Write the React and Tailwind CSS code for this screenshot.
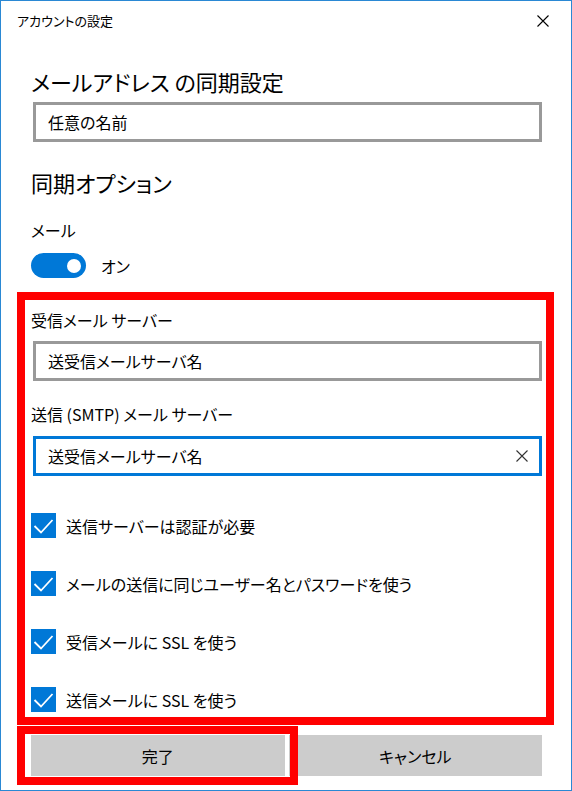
import React from 'react';

const FONT = "font-['Noto_Sans_CJK_JP','Noto_Sans',sans-serif] [font-feature-settings:'palt']";

function CloseIcon({ className }) {
  return (
    <svg viewBox="0 0 12 12" className={className} fill="none" stroke="currentColor" strokeWidth="1.1">
      <path d="M0.5 0.5 L11.5 11.5 M11.5 0.5 L0.5 11.5" />
    </svg>
  );
}

function TextBox({ value, focused }) {
  return (
    <div
      className={`ml-[2px] h-[40px] flex items-center justify-between border-[3px] pl-[12px] pr-[11px] ${
        focused ? 'border-[#0078d7]' : 'border-[#999999]'
      }`}
    >
      <span className="text-[16px] text-black">{value}</span>
      {focused && <CloseIcon className="w-[12px] h-[12px] text-[#333333]" />}
    </div>
  );
}

function CheckRow({ label, className }) {
  return (
    <div className={`flex items-center h-[25px] ${className}`}>
      <div className="w-[25px] h-[25px] bg-[#0078d7] flex items-center justify-center">
        <svg viewBox="0 0 25 25" className="w-[25px] h-[25px]" fill="none" stroke="white" strokeWidth="1.8">
          <path d="M3.5 13 L10 19.5 L21.5 7" />
        </svg>
      </div>
      <span className="ml-[10px] text-[16px] text-black">{label}</span>
    </div>
  );
}

export default function App() {
  return (
    <div className={`w-[572px] h-[791px] bg-white border border-[#2a88d4] flex flex-col ${FONT}`}>
      {/* Title bar */}
      <div className="h-[39px] flex items-center justify-between pl-[16px] pr-[22px]">
        <span className="text-[13px] text-black">アカウントの設定</span>
        <CloseIcon className="w-[12px] h-[12px] text-black" />
      </div>

      <div className="flex flex-col pl-[30px] pr-[29px]">
        <div className="mt-[25px] h-[32px] leading-[32px] text-[22px] text-black">メールアドレス の同期設定</div>
        <div className="mt-[5px]">
          <TextBox value="任意の名前" />
        </div>

        <div className="mt-[24px] h-[32px] leading-[32px] text-[22px] text-black">同期オプション</div>
        <div className="mt-[20px] h-[24px] leading-[24px] text-[16px] text-black">メール</div>
        <div className="mt-[11px] h-[25px] flex items-center">
          <div className="w-[55px] h-[25px] rounded-full bg-[#0078d7] flex items-center justify-end pr-[5px]">
            <div className="w-[14px] h-[14px] rounded-full bg-white" />
          </div>
          <span className="ml-[15px] text-[16px] text-black">オン</span>
        </div>

        {/* Server settings */}
        <div className="relative mt-[14px] pt-[16px] pb-[13px] flex flex-col">
          <div className="absolute -left-[14px] -right-[12px] top-0 bottom-0 border-8 border-[#ff0000] pointer-events-none" />
          <div className="h-[24px] leading-[24px] text-[16px] text-black">受信メール サーバー</div>
          <div className="mt-[9px]">
            <TextBox value="送受信メールサーバ名" />
          </div>
          <div className="mt-[21px] h-[24px] leading-[24px] text-[16px] text-black">送信 (SMTP) メール サーバー</div>
          <div className="mt-[10px]">
            <TextBox value="送受信メールサーバ名" focused />
          </div>
          <CheckRow className="mt-[37px]" label="送信サーバーは認証が必要" />
          <CheckRow className="mt-[33px]" label="メールの送信に同じユーザー名とパスワードを使う" />
          <CheckRow className="mt-[33px]" label="受信メールに SSL を使う" />
          <CheckRow className="mt-[33px]" label="送信メールに SSL を使う" />
        </div>

        {/* Buttons */}
        <div className="mt-[10px] grid grid-cols-2 gap-[4px]">
          <div className="relative">
            <button className="w-full h-[41px] bg-[#cccccc] text-[16px] text-black">完了</button>
            <div className="absolute z-10 -left-[14px] -right-[13px] -top-[9px] -bottom-[9px] border-8 border-[#ff0000] pointer-events-none" />
          </div>
          <button className="w-full h-[41px] bg-[#cccccc] text-[16px] text-black">キャンセル</button>
        </div>
      </div>
    </div>
  );
}
